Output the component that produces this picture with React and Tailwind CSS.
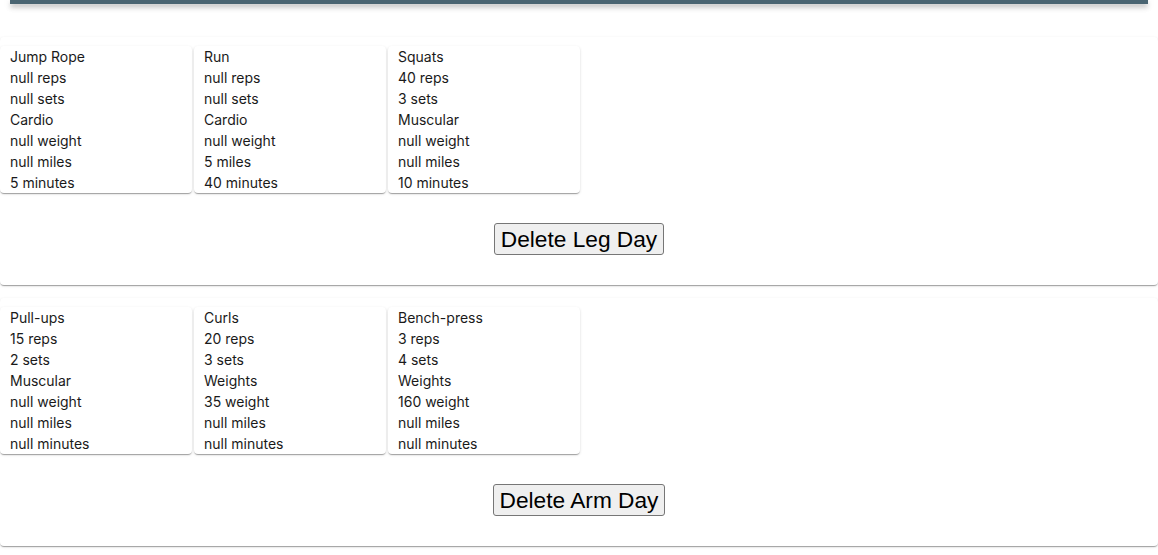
import React from "react";

const days = [
  {
    name: "Leg Day",
    items: [
      ["Jump Rope", "null reps", "null sets", "Cardio", "null weight", "null miles", "5 minutes"],
      ["Run", "null reps", "null sets", "Cardio", "null weight", "5 miles", "40 minutes"],
      ["Squats", "40 reps", "3 sets", "Muscular", "null weight", "null miles", "10 minutes"],
    ],
  },
  {
    name: "Arm Day",
    items: [
      ["Pull-ups", "15 reps", "2 sets", "Muscular", "null weight", "null miles", "null minutes"],
      ["Curls", "20 reps", "3 sets", "Weights", "35 weight", "null miles", "null minutes"],
      ["Bench-press", "3 reps", "4 sets", "Weights", "160 weight", "null miles", "null minutes"],
    ],
  },
];

const shadow =
  "shadow-[0_2px_1px_-1px_rgba(0,0,0,0.2),0_1px_1px_0_rgba(0,0,0,0.14),0_1px_3px_0_rgba(0,0,0,0.12)]";

export default function App() {
  return (
    <div className="w-[1158px] h-[555px] overflow-hidden bg-white text-[#1a1a1a]" style={{ fontFamily: "Inter, 'Noto Sans', sans-serif" }}>
      <div className="mx-[10px] h-[4px] bg-[#4a6572] shadow-[0_2px_4px_-1px_rgba(0,0,0,0.2),0_4px_5px_0_rgba(0,0,0,0.14),0_1px_10px_0_rgba(0,0,0,0.12)]" />
      <div className="mt-[33px] flex flex-col gap-[13px]">
        {days.map((day) => (
          <div key={day.name} className={`bg-white rounded ${shadow} pt-[9px] pb-[30px]`}>
            <div className="flex gap-[2px]">
              {day.items.map((it, i) => (
                <div key={i} className={`w-[192px] bg-white rounded ${shadow} px-[10px]`}>
                  {it.map((t, j) => (
                    <div key={j} className="text-[14px] leading-[21px]">{t}</div>
                  ))}
                </div>
              ))}
            </div>
            <div className="flex justify-center mt-[30px]">
              <button
                className="h-[32px] px-[6px] text-[22.7px] leading-[26px] text-black bg-[#efefef] border border-[#767676] rounded-[3px]"
                style={{ fontFamily: "'Liberation Sans', Arial, sans-serif" }}
              >
                Delete {day.name}
              </button>
            </div>
          </div>
        ))}
      </div>
    </div>
  );
}
